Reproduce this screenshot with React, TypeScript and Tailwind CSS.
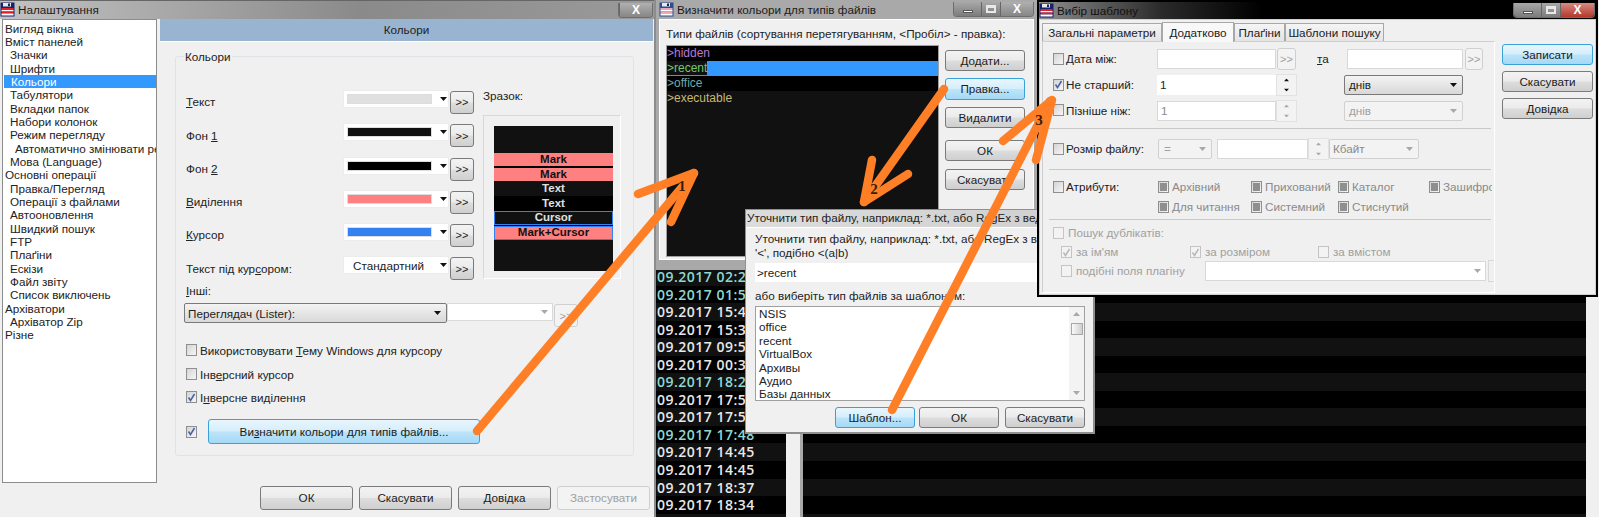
import type { ReactNode } from "react";

const TREE: [number, string][] = [
  [0, "Вигляд вікна"],
  [0, "Вміст панелей"],
  [1, "Значки"],
  [1, "Шрифти"],
  [1, "Кольори"],
  [1, "Табулятори"],
  [1, "Вкладки папок"],
  [1, "Набори колонок"],
  [1, "Режим перегляду"],
  [2, "Автоматично змінювати режим перегляду"],
  [1, "Мова (Language)"],
  [0, "Основні операції"],
  [1, "Правка/Перегляд"],
  [1, "Операції з файлами"],
  [1, "Автооновлення"],
  [1, "Швидкий пошук"],
  [1, "FTP"],
  [1, "Плаґіни"],
  [1, "Ескізи"],
  [1, "Файл звіту"],
  [1, "Список виключень"],
  [0, "Архіватори"],
  [1, "Архіватор Zip"],
  [0, "Різне"],
];

const DATES: [string, boolean][] = [
  ["09.2017 02:2", true],
  ["09.2017 01:5", true],
  ["09.2017 15:4", false],
  ["09.2017 15:3", false],
  ["09.2017 09:5", false],
  ["09.2017 00:3", false],
  ["09.2017 18:2", true],
  ["09.2017 17:5", false],
  ["09.2017 17:5", false],
  ["09.2017 17:48", true],
  ["09.2017 14:45", false],
  ["09.2017 14:45", false],
  ["09.2017 18:37", false],
  ["09.2017 18:34", false],
  ["", false],
];

const Caret = ({ dim }: { dim?: boolean }) => (
  <svg width="7" height="4" viewBox="0 0 7 4" className="shrink-0">
    <path d="M0 0h7L3.5 4z" fill={dim ? "#a8a8a8" : "#111"} />
  </svg>
);

const FloppyIcon = ({ soft }: { soft?: boolean }) => (
  <svg width="15" height="15" viewBox="0 0 15 15" className="shrink-0">
    <rect x="0.5" y="0.5" width="14" height="14" fill={soft ? "#2b4f93" : "#14246b"} />
    <rect x="3" y="1" width="8" height="3.5" fill="#e8e8e8" />
    <rect x="8" y="1.5" width="2" height="2.5" fill="#14246b" />
    <rect x="1.5" y="6" width="12" height="2" fill={soft ? "#e9a6b8" : "#e0202c"} />
    <rect x="1.5" y="8" width="12" height="1.5" fill="#fff" />
    <rect x="1.5" y="9.5" width="12" height="2" fill={soft ? "#e9a6b8" : "#e0202c"} />
    <rect x="1.5" y="11.5" width="12" height="2" fill="#fff" />
  </svg>
);

const WinButtons = ({ full, red }: { full?: boolean; red?: boolean }) => (
  <div className="flex h-[15px] overflow-hidden rounded-b-[4px] border border-t-0 border-[#6e6e6e]">
    {full && (
      <>
        <div className="flex w-[27px] items-center justify-center bg-[linear-gradient(#a8a8a8,#7c7c7c)]">
          <div className="mt-[4px] h-[3px] w-[10px] border border-[#555] bg-white" />
        </div>
        <div className="flex w-[19px] items-center justify-center border-l border-[#666] bg-[linear-gradient(#a8a8a8,#7c7c7c)]">
          <div className="h-[8px] w-[10px] border-2 border-t-[3px] border-[#e8e8e8]" />
        </div>
      </>
    )}
    <div
      className={
        red
          ? "flex w-[34px] items-center justify-center border-l border-[#666] bg-[linear-gradient(#d88a80,#b5392c)] text-[12px] font-bold leading-none text-white"
          : "flex w-[33px] items-center justify-center border-l border-[#666] bg-[linear-gradient(#b0b0b0,#868686)] text-[12px] font-bold leading-none text-white"
      }
    >
      X
    </div>
  </div>
);

const Btn = ({
  children,
  className,
  blue,
  off,
}: {
  children: ReactNode;
  className: string;
  blue?: boolean;
  off?: boolean;
}) => {
  let look =
    "border-[#7a7a7a] bg-[linear-gradient(#f3f3f3,#ebebeb_48%,#dddddd_52%,#cfcfcf)] text-[#1c1c1c]";
  if (blue) look = "border-[#3aa0d8] bg-[linear-gradient(#e9f6fd,#d5eefb_48%,#bce4fa_52%,#a5d9f5)] text-[#1c1c1c]";
  if (off) look = "border-[#cfcfcf] bg-[#f3f3f3] text-[#a0a0a0]";
  return (
    <div className={`flex shrink-0 items-center justify-center rounded-[3px] border ${look} ${className}`}>
      {children}
    </div>
  );
};

const Check = ({ on, mixed, off }: { on?: boolean; mixed?: boolean; off?: boolean }) => (
  <div
    className={
      off
        ? "flex h-[12px] w-[11px] shrink-0 items-center justify-center border border-[#c4c4c4] bg-[#f3f3f3]"
        : "flex h-[12px] w-[11px] shrink-0 items-center justify-center border border-[#8e8f8f] bg-[linear-gradient(135deg,#d4d4d4,#f6f6f6)]"
    }
  >
    {on && (
      <svg width="9" height="9" viewBox="0 0 9 9">
        <path d="M1.5 4.5l2 3 4-6.5" fill="none" stroke={off ? "#b8b8b8" : "#4a5fa8"} strokeWidth="1.5" />
      </svg>
    )}
    {mixed && <div className="h-[8px] w-[7px] bg-[#8f8f8f]" />}
  </div>
);

// рядок кольору: випадний список + кнопка >>
const ColorRow = ({ label, swatch, text }: { label: ReactNode; swatch?: string; text?: string }) => (
  <div className="flex h-[24px] w-[288px]">
    <div className="flex h-[24px] w-[157px] shrink-0 items-center">{label}</div>
    <div className="flex h-[18px] w-[106px] shrink-0 items-center gap-[8px] border border-[#ececec] bg-white pl-[3px] pr-[4px]">
      {swatch ? (
        <div className="h-[10px] w-[85px] shrink-0 border border-[#ddd]" style={{ background: swatch }} />
      ) : (
        <div className="w-[85px] shrink-0 pl-[6px] text-[#222]">{text}</div>
      )}
      <Caret />
    </div>
    <Btn className="ml-[1px] mt-[1px] h-[23px] w-[24px] text-[11px]">&gt;&gt;</Btn>
  </div>
);

const PreviewRow = ({ text, cls }: { text?: string; cls: string }) => (
  <div className={`flex items-center justify-center font-bold ${cls}`}>{text}</div>
);

const CheckLine = ({ on, children, cls }: { on?: boolean; children: ReactNode; cls: string }) => (
  <div className={`flex h-[14px] items-center gap-[3px] whitespace-nowrap ${cls}`}>
    <Check on={on} />
    <span>{children}</span>
  </div>
);

const Spin = ({ off }: { off?: boolean }) => (
  <div className="flex h-[22px] w-[21px] shrink-0 flex-col items-center justify-center gap-[6px] border border-[#e2e2e2] bg-[#f3f3f3]">
    <div className="rotate-180 scale-75">
      <Caret dim={off} />
    </div>
    <div className="scale-75">
      <Caret dim={off} />
    </div>
  </div>
);

const Sep = ({ cls }: { cls: string }) => <div className={`ml-[6px] h-[1px] w-[442px] bg-[#c8c8c8] ${cls}`} />;

const Attr = ({ text, w }: { text: string; w: string }) => (
  <div className={`flex h-[14px] shrink-0 items-center gap-[3px] whitespace-nowrap text-[#8a8a8a] ${w}`}>
    <Check mixed />
    <span>{text}</span>
  </div>
);

const DupCheck = ({ text, on, w }: { text: string; on?: boolean; w: string }) => (
  <div className={`flex shrink-0 items-center gap-[4px] whitespace-nowrap text-[#a0a0a0] ${w}`}>
    <Check on={on} off />
    <span>{text}</span>
  </div>
);

const SettingsWindow = () => (
  <div className="absolute left-0 top-0 flex h-[517px] w-[656px] flex-col border-r-2 border-[#8c8c8c] bg-[#f0f0f0]">
    {/* заголовок */}
    <div className="flex h-[19px] items-center justify-between border-t border-[#666] bg-[linear-gradient(90deg,#c2c2c2,#8a8a8a_55%,#9a9a9a)] pr-[1px]">
      <div className="flex items-center gap-[3px] text-[#1c1c1c]">
        <FloppyIcon />
        <span>Налаштування</span>
      </div>
      <WinButtons />
    </div>

    <div className="flex flex-1">
      {/* дерево */}
      <div className="ml-[2px] h-[464px] w-[155px] shrink-0 overflow-hidden border border-[#8c8c8c] bg-white pt-[1.5px] text-[#222]">
        {TREE.map(([level, name]) => (
          <div
            key={name}
            className={`h-[13.35px] whitespace-nowrap leading-[13px] ${
              name === "Кольори" ? "ml-px bg-[#3399ff] text-white" : ""
            } ${level === 0 ? "pl-[2px]" : level === 1 ? "pl-[7px]" : "pl-[12px]"}`}
          >
            {name}
          </div>
        ))}
      </div>

      <div className="ml-[3px] flex w-[493px] flex-col">
        <div className="flex h-[23px] items-center justify-center border-b border-white bg-[#99b4d1] text-[#222]">Кольори</div>

        {/* група Кольори */}
        <div className="relative ml-[15px] mt-[14px] h-[400px] w-[459px] rounded-[3px] border border-[#dfe3e8] pt-[33px] text-[#222]">
          <span className="absolute left-[8px] top-[-7px] bg-[#f0f0f0] px-[1px] leading-[14px]">Кольори</span>
          <div className="ml-[10px] flex">
            <div className="flex w-[297px] shrink-0 flex-col gap-[9.3px]">
              <ColorRow label={<span><u>Т</u>екст</span>} swatch="#e0e0e0" />
              <ColorRow label={<span>Фон <u>1</u></span>} swatch="#111111" />
              <ColorRow label={<span>Фон <u>2</u></span>} swatch="#000000" />
              <ColorRow label={<span><u>В</u>иділення</span>} swatch="#ff8080" />
              <ColorRow label={<span><u>К</u>урсор</span>} swatch="#3380f0" />
              <ColorRow label={<span>Текст під кур<u>с</u>ором:</span>} text="Стандартний" />
            </div>
            <div className="flex flex-col">
              <div className="h-[25px] leading-[12px]">Зразок:</div>
              <div className="h-[164px] w-[138px] border border-[#d8d8d8] border-b-white border-r-white pl-[10px] pt-[10px]">
                <div className="flex h-[145px] w-[119px] flex-col bg-[#111] text-[11.5px] leading-none">
                  <PreviewRow cls="h-[27px]" />
                  <PreviewRow text="Mark" cls="h-[13px] bg-[#ff8080] text-[#111]" />
                  <PreviewRow cls="h-[2px] bg-black" />
                  <PreviewRow text="Mark" cls="h-[13px] bg-[#ff8080] text-[#111]" />
                  <PreviewRow text="Text" cls="h-[15px] text-[#e0e0e0]" />
                  <PreviewRow text="Text" cls="h-[15px] bg-black text-[#e0e0e0]" />
                  <PreviewRow text="Cursor" cls="h-[14px] border border-[#3380f0] text-[#e0e0e0]" />
                  <PreviewRow cls="h-[1px] bg-black" />
                  <PreviewRow text="Mark+Cursor" cls="h-[14px] border border-[#3380f0] bg-[#ff8080] text-[#111]" />
                </div>
              </div>
            </div>
          </div>

          <div className="ml-[10px] mt-[4px] h-[14px] leading-[14px]"><u>І</u>нші:</div>
          <div className="ml-[8px] mt-[5px] flex items-start">
            <div className="flex h-[20px] w-[263px] items-center justify-between rounded-[2px] border border-[#7a7a7a] bg-[linear-gradient(#f3f3f3,#d8d8d8)] pl-[3px] pr-[5px]">
              <span>Переглядач (Lister):</span>
              <Caret />
            </div>
            <div className="flex h-[18px] w-[106px] items-center justify-end border border-[#dadada] bg-white pr-[4px]">
              <Caret dim />
            </div>
            <Btn off className="ml-[1px] mt-[1px] h-[23px] w-[24px] text-[11px]">&gt;&gt;</Btn>
          </div>

          <CheckLine cls="ml-[10px] mt-[16px]">Використовувати <u>Т</u>ему Windows для курсору</CheckLine>
          <CheckLine cls="ml-[10px] mt-[10px]">Інв<u>е</u>рсний курсор</CheckLine>
          <CheckLine on cls="ml-[10px] mt-[9px]">І<u>н</u>версне виділення</CheckLine>

          <div className="ml-[10px] mt-[15px] flex items-center">
            <Check on />
            <Btn blue className="ml-[11px] h-[25px] w-[272px]">
              <span>Ви<u>з</u>начити кольори для типів файлів...</span>
            </Btn>
          </div>
        </div>

        <div className="ml-[100px] mt-[30px] flex gap-[6px]">
          <Btn className="h-[24px] w-[93px]">ОК</Btn>
          <Btn className="h-[24px] w-[93px]">Скасувати</Btn>
          <Btn className="h-[24px] w-[93px]">Довідка</Btn>
          <Btn off className="h-[24px] w-[93px]">Застосувати</Btn>
        </div>
      </div>
    </div>
  </div>
);

const FileTypesWindow = () => (
  <div className="absolute left-[656px] top-0 flex h-[270px] w-[381px] flex-col bg-[#a9a9a9] px-[3px] pb-[10px]">
    <div className="flex h-[19px] items-center justify-between">
      <div className="flex items-center gap-[3px] text-[#1c1c1c]">
        <FloppyIcon soft />
        <span>Визначити кольори для типів файлів</span>
      </div>
      <WinButtons full />
    </div>
    <div className="flex flex-1 flex-col border border-white bg-[#f0f0f0] pl-[6px]">
      <div className="h-[25px] pt-[7px] leading-[14px] text-[#222]">Типи файлів (сортування перетягуванням, &lt;Пробіл&gt; - правка):</div>
      <div className="flex">
        <div className="h-[212px] w-[273px] shrink-0 border border-[#a0a0a0] bg-[#111] text-[12px] leading-[15px]">
          <div className="h-[15px] bg-black text-[#b878d0]">&gt;hidden</div>
          <div className="h-[15px] bg-[#3399ff] text-[#70c870]"><span className="bg-[#111]">&gt;recent</span></div>
          <div className="h-[15px] bg-black text-[#70a8a8]">&gt;office</div>
          <div className="h-[15px] text-[#c8b870]">&gt;executable</div>
        </div>
        <div className="ml-[6px] flex flex-col pt-[5px] text-[#222]">
          <Btn className="h-[21px] w-[80px]">Додати...</Btn>
          <Btn blue className="mt-[7px] h-[22px] w-[80px]">Правка...</Btn>
          <Btn className="mt-[7px] h-[21px] w-[80px]">Видалити</Btn>
          <Btn className="mt-[12px] h-[21px] w-[80px]">ОК</Btn>
          <Btn className="mt-[8px] h-[21px] w-[80px]">Скасувати</Btn>
        </div>
      </div>
    </div>
  </div>
);

const MaskDialog = () => (
  <div className="absolute left-[745px] top-[209px] flex h-[225px] w-[350px] flex-col border-b-2 border-l border-r-2 border-t border-[#8f8f8f] bg-[#f0f0f0] text-[#222]">
    <div className="h-[17px] whitespace-nowrap bg-[linear-gradient(90deg,#dcdcdc,#cfcfcf)] pl-[1px] leading-[16px]">
      Уточнити тип файлу, наприклад: *.txt, або RegEx з ведучим символом
    </div>
    <div className="border-t border-white pl-[9px] pt-[4px]">
      <div className="h-[13.5px] whitespace-nowrap leading-[14px]">Уточнити тип файлу, наприклад: *.txt, або RegEx з ведучим символом</div>
      <div className="h-[13.5px] whitespace-nowrap leading-[14px]">'&lt;', подібно &lt;(a|b)</div>
      <div className="mt-[4px] flex h-[19px] w-[330px] items-center bg-white pl-[2px]">&gt;recent</div>
      <div className="mt-[7px] h-[14px] leading-[14px]">або виберіть тип файлів за шаблоном:</div>
      <div className="mt-[3px] flex h-[95px] w-[330px] border border-[#a0a0a0] bg-white">
        <div className="flex-1 pl-[3px] leading-[13.4px]">
          {["NSIS", "office", "recent", "VirtualBox", "Архивы", "Аудио", "Базы данных"].map((name) => (
            <div key={name} className="h-[13.4px]">{name}</div>
          ))}
        </div>
        <div className="flex w-[15px] flex-col items-center justify-between bg-[#f3f3f3] py-[5px]">
          <div className="rotate-180"><Caret dim /></div>
          <div className="mb-[54px] mt-[4px] h-[12px] w-[12px] border border-[#a8a8a8] bg-[linear-gradient(90deg,#fafafa,#d0d0d0)]" />
          <Caret dim />
        </div>
      </div>
      <div className="ml-[80px] mt-[6px] flex">
        <Btn blue className="h-[21px] w-[80px]">Шаблон...</Btn>
        <Btn className="ml-[4px] h-[21px] w-[80px]">ОК</Btn>
        <Btn className="ml-[6px] h-[21px] w-[80px]">Скасувати</Btn>
      </div>
    </div>
  </div>
);

const TemplateWindow = () => (
  <div className="absolute left-[1037px] top-0 flex h-[297px] w-[561px] flex-col border-2 border-black bg-black text-[#222]">
    <div className="flex h-[17px] items-center justify-between bg-[linear-gradient(90deg,#8f8f8f,#2a2a2a_22%,#000_40%)] pr-[1px]">
      <div className="flex items-center gap-[3px]">
        <FloppyIcon />
        <span className="text-[#111]">Вибір шаблону</span>
      </div>
      <WinButtons full red />
    </div>
    <div className="flex flex-1 border border-[#d0d0d0] bg-[#f0f0f0] pl-[2px] pt-[2px]">
      <div className="flex w-[453px] shrink-0 flex-col">
        {/* вкладки */}
        <div className="flex h-[19px] items-end">
          <div className="flex h-[18px] w-[120px] shrink-0 items-center justify-center border border-b-0 border-[#a8a8a8] bg-[linear-gradient(#f5f5f5,#e4e4e4)]">Загальні параметри</div>
          <div className="z-10 mb-[-1px] flex h-[20px] w-[72px] shrink-0 items-center justify-center border border-b-0 border-[#a8a8a8] bg-[#f8f8f8]">Додатково</div>
          <div className="flex h-[18px] w-[51px] shrink-0 items-center justify-center border border-b-0 border-[#a8a8a8] bg-[linear-gradient(#f5f5f5,#e4e4e4)]">Плаґіни</div>
          <div className="flex h-[18px] w-[99px] shrink-0 items-center justify-center border border-b-0 border-[#a8a8a8] bg-[linear-gradient(#f5f5f5,#e4e4e4)]">Шаблони пошуку</div>
        </div>

        <div className="h-[252px] overflow-hidden border border-[#cfcfcf] border-b-white border-r-white pt-[4px]">
          <div className="flex h-[26px] items-center">
            <div className="ml-[10px] flex w-[104px] shrink-0 items-center gap-[2px]"><Check /><span>Дата між:</span></div>
            <div className="h-[20px] w-[119px] shrink-0 border border-[#d8d8d8] bg-white" />
            <Btn off className="ml-[1px] h-[22px] w-[19px] text-[11px]">&gt;&gt;</Btn>
            <span className="ml-[21px] w-[30px] shrink-0"><u>т</u>а</span>
            <div className="h-[20px] w-[116px] shrink-0 border border-[#d8d8d8] bg-white" />
            <Btn off className="ml-[2px] h-[22px] w-[18px] text-[11px]">&gt;&gt;</Btn>
          </div>
          <div className="flex h-[26px] items-center">
            <div className="ml-[10px] flex w-[104px] shrink-0 items-center gap-[2px]"><Check on /><span>Не старший:</span></div>
            <div className="flex h-[20px] w-[119px] shrink-0 items-center bg-white pl-[3px]">1</div>
            <Spin />
            <div className="ml-[47px] flex h-[20px] w-[119px] shrink-0 items-center justify-between rounded-[2px] border border-[#7a7a7a] bg-[linear-gradient(#f3f3f3,#d8d8d8)] pl-[4px] pr-[5px]">
              <span>днів</span>
              <Caret />
            </div>
          </div>
          <div className="flex h-[25px] items-center">
            <div className="ml-[10px] flex w-[104px] shrink-0 items-center gap-[2px]"><Check /><span>Пізніше ніж:</span></div>
            <div className="flex h-[20px] w-[119px] shrink-0 items-center border border-[#d8d8d8] bg-white pl-[3px] text-[#8a8a8a]">1</div>
            <Spin off />
            <div className="ml-[47px] flex h-[20px] w-[119px] shrink-0 items-center justify-between rounded-[2px] border border-[#d0d0d0] bg-[#f3f3f3] pl-[4px] pr-[5px] text-[#a0a0a0]">
              <span>днів</span>
              <Caret dim />
            </div>
          </div>
          <Sep cls="mt-[5px]" />
          <div className="mt-[10px] flex h-[20px] items-center">
            <div className="ml-[10px] flex w-[105px] shrink-0 items-center gap-[2px]"><Check /><span>Розмір файлу:</span></div>
            <div className="flex h-[20px] w-[54px] shrink-0 items-center justify-between rounded-[2px] border border-[#d0d0d0] bg-[#f3f3f3] pl-[5px] pr-[5px] text-[#a0a0a0]">
              <span>=</span>
              <Caret dim />
            </div>
            <div className="ml-[5px] h-[20px] w-[91px] shrink-0 border border-[#d8d8d8] bg-white" />
            <Spin off />
            <div className="flex h-[20px] w-[90px] shrink-0 items-center justify-between rounded-[2px] border border-[#d0d0d0] bg-[#f3f3f3] pl-[3px] pr-[5px] text-[#8a8a8a]">
              <span>Кбайт</span>
              <Caret dim />
            </div>
          </div>
          <Sep cls="mt-[10px]" />
          <div className="mt-[10px] flex h-[14px] items-center">
            <div className="ml-[10px] flex w-[105px] shrink-0 items-center gap-[2px]"><Check /><span>Атрибути:</span></div>
            <Attr text="Архівний" w="w-[93px]" />
            <Attr text="Прихований" w="w-[87px]" />
            <Attr text="Каталог" w="w-[91px]" />
            <Attr text="Зашифрований" w="w-[63px] overflow-hidden" />
          </div>
          <div className="ml-[115px] mt-[6px] flex h-[14px] items-center">
            <Attr text="Для читання" w="w-[93px]" />
            <Attr text="Системний" w="w-[87px]" />
            <Attr text="Стиснутий" w="w-[91px]" />
          </div>
          <Sep cls="mt-[5px]" />
          <div className="ml-[10px] mt-[6px] flex h-[14px] items-center"><DupCheck text="Пошук дублікатів:" w="" /></div>
          <div className="ml-[18px] mt-[5px] flex h-[14px] items-center">
            <DupCheck on text="за ім'ям" w="w-[129px]" />
            <DupCheck on text="за розміром" w="w-[128px]" />
            <DupCheck text="за вмістом" w="" />
          </div>
          <div className="ml-[18px] mt-[2px] flex h-[20px] items-center">
            <DupCheck text="подібні поля плагіну" w="w-[144px]" />
            <div className="flex h-[20px] w-[281px] shrink-0 items-center justify-end border border-[#d8d8d8] bg-white pr-[4px]"><Caret dim /></div>
            <div className="ml-[2px] h-[22px] w-[8px] shrink-0 border border-r-0 border-[#d8d8d8]" />
          </div>
        </div>
      </div>
      <div className="ml-[7px] flex flex-col gap-[6px] pt-[22px]">
        <Btn blue className="h-[21px] w-[91px]">Записати</Btn>
        <Btn className="h-[21px] w-[91px]">Скасувати</Btn>
        <Btn className="h-[21px] w-[91px]">Довідка</Btn>
      </div>
    </div>
  </div>
);

const OrangeArrows = () => (
  <svg className="absolute left-0 top-0 z-20" width="1599" height="517" viewBox="0 0 1599 517">
    <g fill="none" stroke="#ff7f27" strokeWidth="8.5" strokeLinecap="round" strokeLinejoin="round">
      <path d="M477 431L694 173" />
      <path d="M638 194L694 173L671 222" />
      <path d="M944 89L864 202" />
      <path d="M872 160L864 202L908 174" />
      <path d="M892 410L1050 101" />
      <path d="M1003 141L1052 100L1036 160" />
    </g>
    <g fill="#3a1d05" fontFamily="'Liberation Serif', serif" fontSize="15" fontWeight="700" textAnchor="middle">
      <text x="682" y="191">1</text>
      <text x="874" y="194">2</text>
      <text x="1039" y="125">3</text>
    </g>
  </svg>
);

export default function App() {
  return (
    <div className="relative flex h-[517px] w-[1599px] overflow-hidden bg-[#f0f0f0] font-['Liberation_Sans',sans-serif] text-[11.7px]">
      {/* фон: панелі файлового менеджера */}
      <div className="ml-[656px] h-[517px] w-[130px] shrink-0 bg-black pt-[268px]">
        {DATES.map(([date, teal], i) => (
          <div
            key={i}
            className={`h-[17.55px] whitespace-nowrap pl-[1px] font-['Open_Sans',sans-serif] text-[14px] font-semibold leading-[18px] tracking-[0.5px] ${
              i % 2 === 0 ? "bg-[#111]" : "bg-black"
            } ${teal ? "text-[#8fd8d0]" : "text-[#e8e8e8]"}`}
          >
            {date}
          </div>
        ))}
      </div>
      <div className="h-[517px] w-[14px] shrink-0 bg-[#f0f0f0]" />
      <div className="h-[517px] w-[3px] shrink-0 bg-[#a8a8a8]" />
      <div className="h-[517px] w-[783px] shrink-0 pt-[268px]">
        {DATES.map((_, i) => (
          <div key={i} className={`h-[17.55px] ${i % 2 === 0 ? "bg-[#111]" : "bg-black"}`} />
        ))}
      </div>

      <SettingsWindow />
      <FileTypesWindow />
      <MaskDialog />
      <TemplateWindow />
      <OrangeArrows />
    </div>
  );
}
